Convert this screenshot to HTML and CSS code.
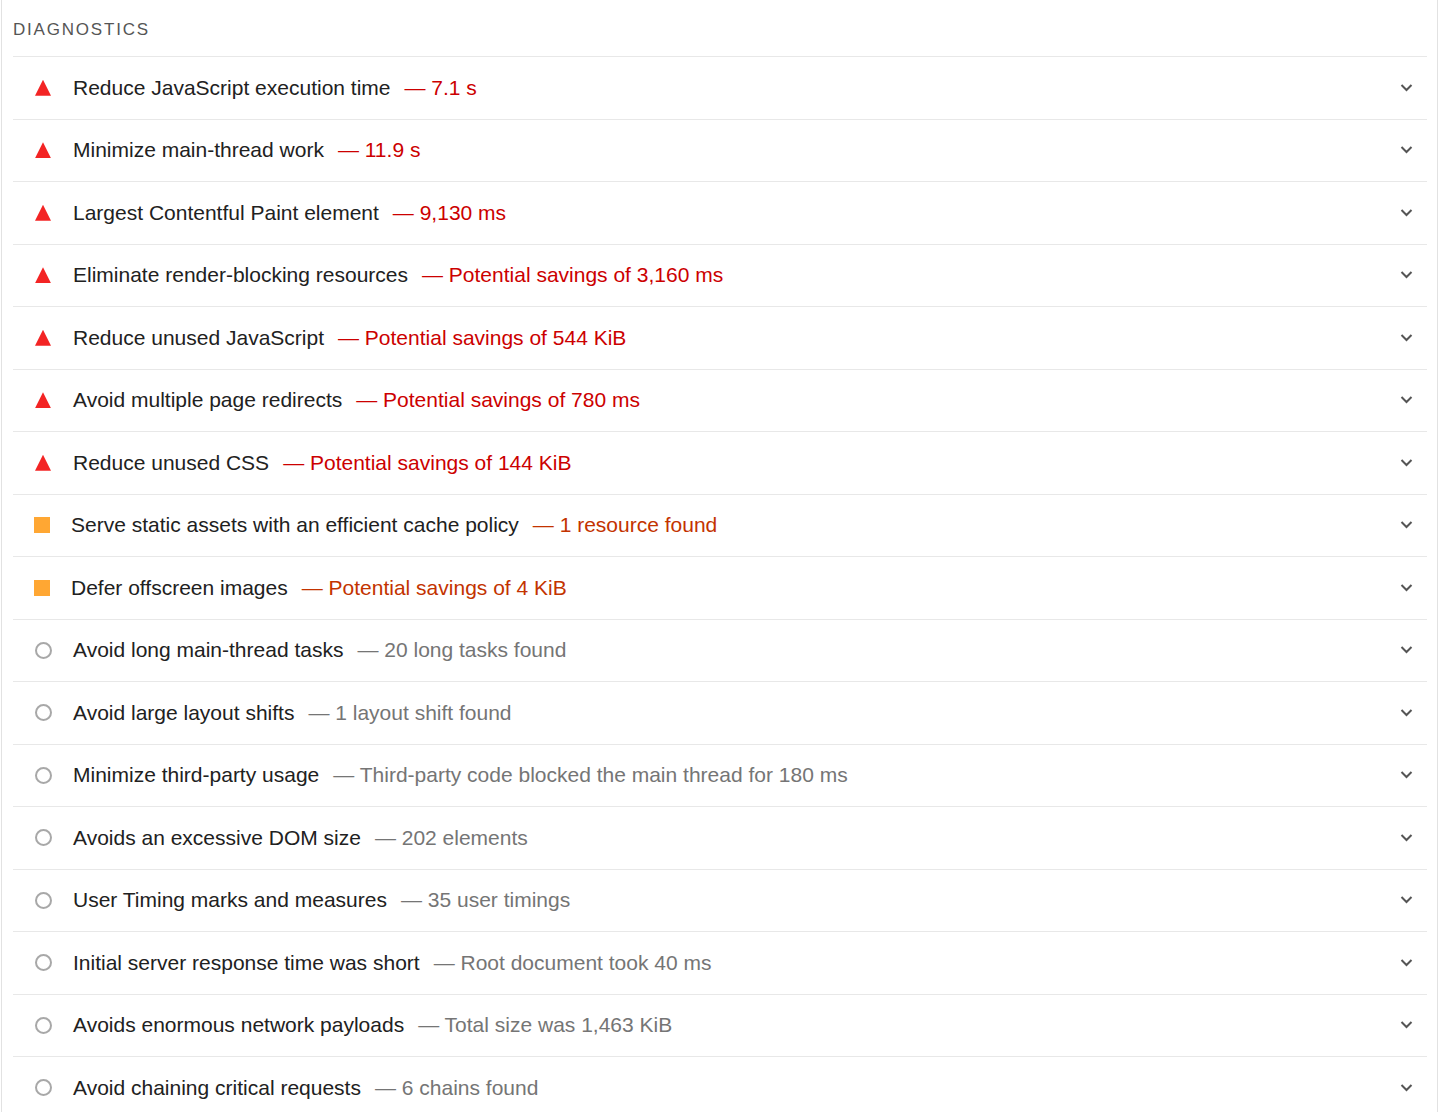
FILE: index.html
```html
<!DOCTYPE html>
<html lang="en">
<head>
    <meta charset="UTF-8">
    <title>Diagnostics</title>
    <link rel="stylesheet" href="styles.css">
</head>
<body>
    <div class="panel">
        <div class="group-title">Diagnostics</div>

        <div class="audit fail">
            <span class="icon"></span>
            <span class="audit-title">Reduce JavaScript execution time</span>
            <span class="display-text">— 7.1 s</span>
            <svg class="chevron" viewBox="0 0 12 8"><path d="M1 1l5 5 5-5"/></svg>
        </div>
        <div class="audit fail">
            <span class="icon"></span>
            <span class="audit-title">Minimize main-thread work</span>
            <span class="display-text">— 11.9 s</span>
            <svg class="chevron" viewBox="0 0 12 8"><path d="M1 1l5 5 5-5"/></svg>
        </div>
        <div class="audit fail">
            <span class="icon"></span>
            <span class="audit-title">Largest Contentful Paint element</span>
            <span class="display-text">— 9,130 ms</span>
            <svg class="chevron" viewBox="0 0 12 8"><path d="M1 1l5 5 5-5"/></svg>
        </div>
        <div class="audit fail">
            <span class="icon"></span>
            <span class="audit-title">Eliminate render-blocking resources</span>
            <span class="display-text">— Potential savings of 3,160 ms</span>
            <svg class="chevron" viewBox="0 0 12 8"><path d="M1 1l5 5 5-5"/></svg>
        </div>
        <div class="audit fail">
            <span class="icon"></span>
            <span class="audit-title">Reduce unused JavaScript</span>
            <span class="display-text">— Potential savings of 544 KiB</span>
            <svg class="chevron" viewBox="0 0 12 8"><path d="M1 1l5 5 5-5"/></svg>
        </div>
        <div class="audit fail">
            <span class="icon"></span>
            <span class="audit-title">Avoid multiple page redirects</span>
            <span class="display-text">— Potential savings of 780 ms</span>
            <svg class="chevron" viewBox="0 0 12 8"><path d="M1 1l5 5 5-5"/></svg>
        </div>
        <div class="audit fail">
            <span class="icon"></span>
            <span class="audit-title">Reduce unused CSS</span>
            <span class="display-text">— Potential savings of 144 KiB</span>
            <svg class="chevron" viewBox="0 0 12 8"><path d="M1 1l5 5 5-5"/></svg>
        </div>
        <div class="audit average">
            <span class="icon"></span>
            <span class="audit-title">Serve static assets with an efficient cache policy</span>
            <span class="display-text">— 1 resource found</span>
            <svg class="chevron" viewBox="0 0 12 8"><path d="M1 1l5 5 5-5"/></svg>
        </div>
        <div class="audit average">
            <span class="icon"></span>
            <span class="audit-title">Defer offscreen images</span>
            <span class="display-text">— Potential savings of 4 KiB</span>
            <svg class="chevron" viewBox="0 0 12 8"><path d="M1 1l5 5 5-5"/></svg>
        </div>
        <div class="audit info">
            <span class="icon"></span>
            <span class="audit-title">Avoid long main-thread tasks</span>
            <span class="display-text">— 20 long tasks found</span>
            <svg class="chevron" viewBox="0 0 12 8"><path d="M1 1l5 5 5-5"/></svg>
        </div>
        <div class="audit info">
            <span class="icon"></span>
            <span class="audit-title">Avoid large layout shifts</span>
            <span class="display-text">— 1 layout shift found</span>
            <svg class="chevron" viewBox="0 0 12 8"><path d="M1 1l5 5 5-5"/></svg>
        </div>
        <div class="audit info">
            <span class="icon"></span>
            <span class="audit-title">Minimize third-party usage</span>
            <span class="display-text">— Third-party code blocked the main thread for 180 ms</span>
            <svg class="chevron" viewBox="0 0 12 8"><path d="M1 1l5 5 5-5"/></svg>
        </div>
        <div class="audit info">
            <span class="icon"></span>
            <span class="audit-title">Avoids an excessive DOM size</span>
            <span class="display-text">— 202 elements</span>
            <svg class="chevron" viewBox="0 0 12 8"><path d="M1 1l5 5 5-5"/></svg>
        </div>
        <div class="audit info">
            <span class="icon"></span>
            <span class="audit-title">User Timing marks and measures</span>
            <span class="display-text">— 35 user timings</span>
            <svg class="chevron" viewBox="0 0 12 8"><path d="M1 1l5 5 5-5"/></svg>
        </div>
        <div class="audit info">
            <span class="icon"></span>
            <span class="audit-title">Initial server response time was short</span>
            <span class="display-text">— Root document took 40 ms</span>
            <svg class="chevron" viewBox="0 0 12 8"><path d="M1 1l5 5 5-5"/></svg>
        </div>
        <div class="audit info">
            <span class="icon"></span>
            <span class="audit-title">Avoids enormous network payloads</span>
            <span class="display-text">— Total size was 1,463 KiB</span>
            <svg class="chevron" viewBox="0 0 12 8"><path d="M1 1l5 5 5-5"/></svg>
        </div>
        <div class="audit info">
            <span class="icon"></span>
            <span class="audit-title">Avoid chaining critical requests</span>
            <span class="display-text">— 6 chains found</span>
            <svg class="chevron" viewBox="0 0 12 8"><path d="M1 1l5 5 5-5"/></svg>
        </div>
    </div>
</body>
</html>
```

FILE: styles.css
```css
/* General Styling */
body {
    font-family: 'Liberation Sans', Arial, sans-serif;
    background-color: #ffffff;
    color: #212121;
    margin: 0;
    padding: 0;
}

/* Panel with thin side rules */
.panel {
    margin-left: 1px;
    width: 1437px;
    min-height: 1112px;
    border-left: 1px solid #e2e2e2;
    border-right: 1px solid #e2e2e2;
    padding: 0 10px 0 11px;
    box-sizing: border-box;
}

/* Group heading */
.group-title {
    height: 56px;
    padding-top: 3px;
    box-sizing: border-box;
    display: flex;
    align-items: center;
    font-size: 17px;
    letter-spacing: 1.8px;
    text-transform: uppercase;
    color: #555555;
}

/* Audit rows */
.audit {
    display: flex;
    align-items: center;
    height: 62.5px;
    box-sizing: border-box;
    border-top: 1px solid #e8e8e8;
    padding: 0 14px 0 22px;
    font-size: 21px;
}

.audit-title {
    color: #212121;
}

.display-text {
    margin-left: 14px;
}

.chevron {
    width: 13px;
    height: 8px;
    margin-left: auto;
    fill: none;
    stroke: #555555;
    stroke-width: 2;
}

/* Status icons */
.icon {
    width: 16px;
    height: 16px;
    margin-right: 22px;
    flex-shrink: 0;
    box-sizing: border-box;
}

.fail .icon {
    clip-path: polygon(50% 0, 100% 100%, 0 100%);
    background-color: #f32424;
}

.fail .display-text {
    color: #cc0000;
}

.average .icon {
    margin-left: -1px;
    margin-right: 21px;
    background-color: #ffa733;
}

.average .display-text {
    color: #c33300;
}

.info .icon {
    width: 17px;
    height: 17px;
    margin-right: 21px;
    border: 2.5px solid #a8a8a8;
    border-radius: 50%;
}

.info .display-text {
    color: #757575;
}
```
